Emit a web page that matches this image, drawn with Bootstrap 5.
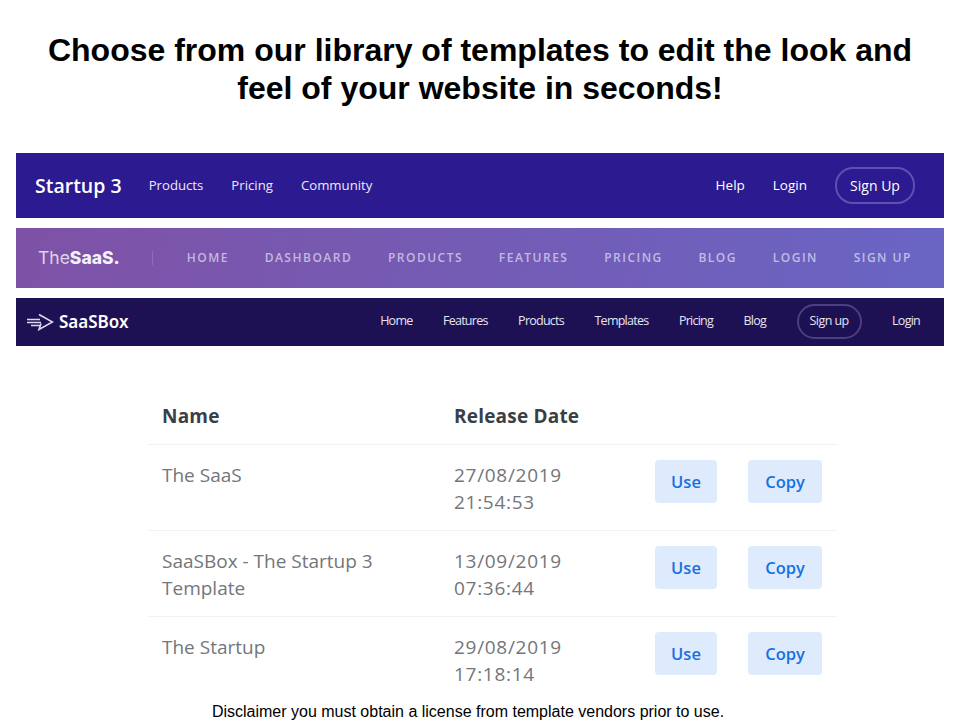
<!DOCTYPE html>
<html lang="en">
<head>
    <meta charset="UTF-8">
    <title>Templates</title>
    <link rel="stylesheet" href="https://cdn.jsdelivr.net/npm/bootstrap@5.3.0/dist/css/bootstrap.min.css">
    <style>
        body {
            font-family: "Liberation Sans", Arial, sans-serif;
            background: #fff;
            overflow: hidden;
        }
        .page {
            width: 960px;
            height: 720px;
            padding: 31px 16px 0;
            position: relative;
        }
        .headline {
            font-family: "Liberation Sans", Arial, sans-serif;
            font-size: 32px;
            line-height: 38px;
            font-weight: 700;
            color: #000;
            text-align: center;
            margin: 0 0 46px;
        }
        .bar {
            font-family: "Open Sans", sans-serif;
            color: #fff;
            margin-bottom: 10px;
        }
        .bar a { color: inherit; text-decoration: none; }
        .bar-one {
            height: 65px;
            background: #2c1a90;
            padding: 0 29px 0 19px;
        }
        .bar-one .brand { font-size: 19.500px; font-weight: 600; margin-right: 27px; }
        .bar-one .links { gap: 28px; font-size: 13.200px; color: #ece9f8; padding-top: 1px; }
        .bar-one .right { gap: 28px; font-size: 13.500px; }
        .bar-one .right .pill-one { font-size: 14px; }
        .pill-one {
            border: 2px solid #5f4fb0;
            border-radius: 18px;
            height: 37px;
            width: 80px;
            display: flex;
            align-items: center;
            justify-content: center;
        }
        .bar-two {
            height: 60px;
            background: linear-gradient(100deg, #7e52a6, #6a65c4);
            padding: 0 32px 0 22px;
            color: rgba(255, 255, 255, .58);
        }
        .bar-two .brand { font-family: Inter, sans-serif; font-size: 17.500px; color: rgba(255, 255, 255, .75); }
        .bar-two .brand b { font-weight: 800; color: #f4eff9; }
        .bar-two .sep { width: 1px; height: 14px; background: rgba(255, 255, 255, .14); margin: 0 34px 0 32px; }
        .bar-two .links { flex: 1; font-size: 12px; font-weight: 600; letter-spacing: 1.500px; }
        .bar-three {
            height: 48px;
            background: #1d1153;
            padding: 0 24px 0 11px;
        }
        .bar-three .brand { font-size: 17px; font-weight: 600; gap: 5px; font-family: "Noto Sans", sans-serif; }
        .bar-three .links { gap: 30.500px; font-size: 12.500px; color: #e6e4f0; letter-spacing: -.75px; padding-bottom: 2px; }
        .pill-three {
            border: 2px solid #4a3f80;
            border-radius: 18px;
            height: 35px;
            width: 65px;
            display: flex;
            align-items: center;
            justify-content: center;
            color: #fff;
            letter-spacing: -.55px;
        }
        .tpl-table {
            width: 689px;
            margin: 50px 0 0 132px;
            font-family: "Open Sans", sans-serif;
        }
        .tpl-table .tpl-row {
            display: grid;
            grid-template-columns: 292px 201px 93px 1fr;
            padding: 17px 14px 0;
            border-bottom: 1px solid #f2f2f2;
            color: #73767a;
            font-size: 19px;
            line-height: 27px;
            height: 86px;
        }
        .tpl-table .tpl-row .when { letter-spacing: .7px; }
        .tpl-table .tpl-head {
            height: 49px;
            padding-top: 7px;
            color: #3a3f45;
            font-weight: 700;
            letter-spacing: .2px;
            border-bottom-color: #f0f0f0;
        }
        .tpl-table .tpl-row:last-child { border-bottom: 0; }
        .act {
            background: #deebfd;
            color: #1a6fe0;
            font-size: 16.500px;
            font-weight: 600;
            border: 0;
            border-radius: 4px;
            height: 43px;
            line-height: 43px;
            padding: 0;
            margin-top: -2px;
        }
        .act:hover { background: #cfe2fc; color: #1a6fe0; }
        .act-use { width: 62px; }
        .act-copy { width: 74px; }
        .disclaimer {
            position: absolute;
            left: 0;
            right: 24px;
            top: 703px;
            margin: 0;
            text-align: center;
            font-size: 16px;
            line-height: 18px;
            color: #000;
        }
    </style>
</head>
<body>
    <div class="page">
        <h1 class="headline">Choose from our library of templates to edit the look and<br>feel of your website in seconds!</h1>

        <div class="bar bar-one d-flex align-items-center">
            <a href="#" class="brand">Startup 3</a>
            <div class="links d-flex">
                <a href="#">Products</a>
                <a href="#">Pricing</a>
                <a href="#">Community</a>
            </div>
            <div class="right d-flex align-items-center ms-auto">
                <a href="#">Help</a>
                <a href="#">Login</a>
                <a href="#" class="pill-one">Sign Up</a>
            </div>
        </div>

        <div class="bar bar-two d-flex align-items-center">
            <a href="#" class="brand">The<b>SaaS.</b></a>
            <span class="sep"></span>
            <div class="links d-flex justify-content-between">
                <a href="#">HOME</a>
                <a href="#">DASHBOARD</a>
                <a href="#">PRODUCTS</a>
                <a href="#">FEATURES</a>
                <a href="#">PRICING</a>
                <a href="#">BLOG</a>
                <a href="#">LOGIN</a>
                <a href="#">SIGN UP</a>
            </div>
        </div>

        <div class="bar bar-three d-flex align-items-center justify-content-between">
            <a href="#" class="brand d-flex align-items-center">
                <svg width="27" height="18" viewBox="0 0 27 18" fill="none" stroke="#dcd9f0" stroke-width="1.600">
                    <path d="M0 6.500h13M0 9.500h14M4 12.500h9"/>
                    <path d="M12 1.500l13.500 7.500-13.500 7.500 2-6"/>
                </svg>
                <span>SaaSBox</span>
            </a>
            <div class="links d-flex align-items-center">
                <a href="#">Home</a>
                <a href="#">Features</a>
                <a href="#">Products</a>
                <a href="#">Templates</a>
                <a href="#">Pricing</a>
                <a href="#">Blog</a>
                <a href="#" class="pill-three">Sign up</a>
                <a href="#">Login</a>
            </div>
        </div>

        <div class="tpl-table">
            <div class="tpl-row tpl-head"><span>Name</span><span>Release Date</span></div>
            <div class="tpl-row">
                <span>The SaaS</span><span class="when">27/08/2019<br>21:54:53</span>
                <div><button class="btn act act-use">Use</button></div>
                <div><button class="btn act act-copy">Copy</button></div>
            </div>
            <div class="tpl-row">
                <span>SaaSBox - The Startup 3<br>Template</span><span class="when">13/09/2019<br>07:36:44</span>
                <div><button class="btn act act-use">Use</button></div>
                <div><button class="btn act act-copy">Copy</button></div>
            </div>
            <div class="tpl-row">
                <span>The Startup</span><span class="when">29/08/2019<br>17:18:14</span>
                <div><button class="btn act act-use">Use</button></div>
                <div><button class="btn act act-copy">Copy</button></div>
            </div>
        </div>

        <p class="disclaimer">Disclaimer you must obtain a license from template vendors prior to use.</p>
    </div>
    <script src="https://cdn.jsdelivr.net/npm/bootstrap@5.3.0/dist/js/bootstrap.bundle.min.js"></script>
</body>
</html>
